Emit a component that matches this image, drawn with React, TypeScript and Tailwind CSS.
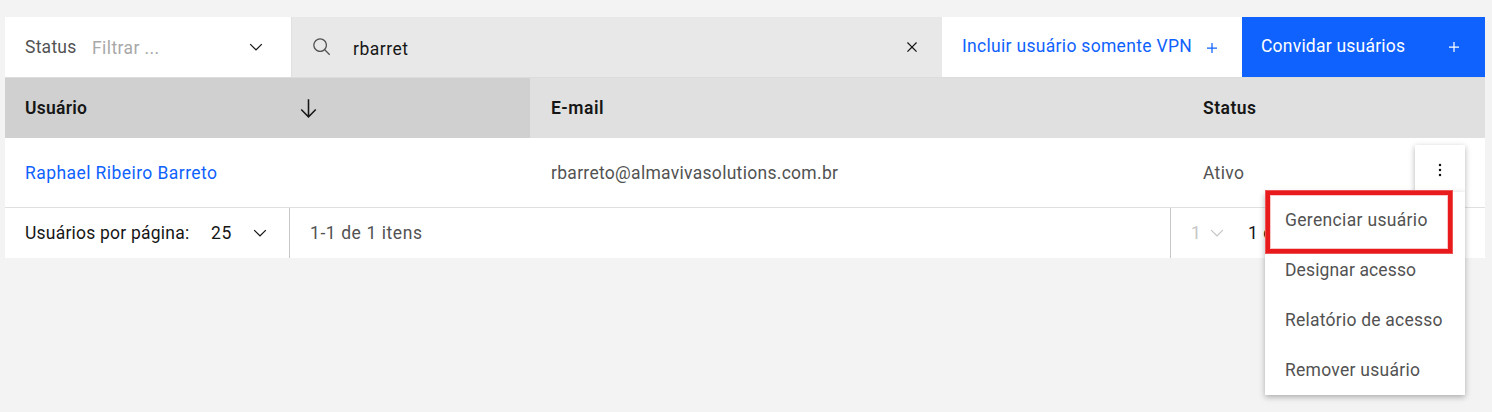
import React from "react";

type IconProps = { className?: string };

const ChevronDown = ({ className = "" }: IconProps) => (
  <svg viewBox="0 0 16 16" fill="currentColor" className={`size-5 shrink-0 ${className}`}>
    <path d="M8 11L3 6 3.7 5.3 8 9.6 12.3 5.3 13 6z" />
  </svg>
);

const Search = ({ className = "" }: IconProps) => (
  <svg viewBox="0 0 32 32" fill="currentColor" className={`size-5 shrink-0 ${className}`}>
    <path d="M29,27.5859l-7.5521-7.5521a11.0177,11.0177,0,1,0-1.4141,1.4141L27.5859,29ZM4,13a9,9,0,1,1,9,9A9.01,9.01,0,0,1,4,13Z" />
  </svg>
);

const Close = ({ className = "" }: IconProps) => (
  <svg viewBox="0 0 32 32" fill="currentColor" className={`size-5 shrink-0 ${className}`}>
    <path d="M24 9.4L22.6 8 16 14.6 9.4 8 8 9.4 14.6 16 8 22.6 9.4 24 16 17.4 22.6 24 24 22.6 17.4 16 24 9.4z" />
  </svg>
);

const Add = ({ className = "" }: IconProps) => (
  <svg viewBox="0 0 32 32" fill="currentColor" className={`size-5 shrink-0 ${className}`}>
    <path d="M17 15V8h-2v7H8v2h7v7h2v-7h7v-2z" />
  </svg>
);

const ArrowDown = ({ className = "" }: IconProps) => (
  <svg viewBox="0 0 32 32" fill="currentColor" className={`size-[25px] shrink-0 ${className}`}>
    <path d="M24.59 16.59L17 24.17V4h-2v20.17l-7.59-7.58L6 18l10 10 10-10-1.41-1.41z" />
  </svg>
);

const Overflow = ({ className = "" }: IconProps) => (
  <svg viewBox="0 0 32 32" fill="currentColor" className={`size-5 shrink-0 ${className}`}>
    <circle cx="16" cy="8" r="2" />
    <circle cx="16" cy="16" r="2" />
    <circle cx="16" cy="24" r="2" />
  </svg>
);

const menuItems = [
  { label: "Gerenciar usuário", spacing: "tracking-[0.33px]" },
  { label: "Designar acesso", spacing: "tracking-[0.12px]" },
  { label: "Relatório de acesso", spacing: "tracking-[0.23px]" },
  { label: "Remover usuário", spacing: "tracking-[0.27px]" },
];

function Toolbar() {
  return (
    <div className="flex h-15 bg-white">
      <div className="flex w-[286px] items-center pl-5">
        <span className="w-[67px] tracking-[0.25px] text-[#525252]">Status</span>
        <span className="mt-0.5 flex-1 tracking-[0.4px] text-[#a8a8a8]">Filtrar ...</span>
        <ChevronDown className="mr-[25px] text-[#161616]" />
      </div>
      <div className="flex w-[651px] items-center border-l border-[#e0e0e0] bg-[#e8e8e8] pl-5">
        <Search className="text-[#525252]" />
        <span className="mt-[3px] ml-[21px] flex-1 tracking-[0.5px] text-[#161616]">rbarret</span>
        <Close className="mr-5 text-[#161616]" />
      </div>
      <button className="flex w-[300px] items-center pl-5 text-[#0f62fe]">
        <span className="-mt-0.5 w-[240px] text-left tracking-[0.31px]">Incluir usuário somente VPN</span>
        <Add className="mt-0.5" />
      </button>
      <button className="flex w-[243px] items-center bg-[#0f62fe] pl-[19px] text-white">
        <span className="-mt-0.5 flex-1 text-left tracking-[0.22px]">Convidar usuários</span>
        <Add className="mr-[21px]" />
      </button>
    </div>
  );
}

function ActionMenu() {
  return (
    <div className="absolute top-[7px] right-5 w-[200px]">
      <div className="flex justify-end">
        <button className="flex h-[47px] w-[50px] justify-center bg-white pt-[15px] text-[#161616] shadow-[0_2px_6px_rgba(0,0,0,0.3)]">
          <Overflow />
        </button>
      </div>
      <ul className="relative h-[203px] bg-white shadow-[0_2px_6px_rgba(0,0,0,0.3)]">
        {menuItems.map((item) => (
          <li key={item.label} className={`flex h-[50px] items-center pl-5 text-[#525252] ${item.spacing}`}>
            <span className="mt-[5px]">{item.label}</span>
          </li>
        ))}
      </ul>
      <div className="absolute top-[45px] left-0 h-16 w-[188px] border border-[#ec5455] shadow-[inset_0_0_0_4px_#e81a1c,inset_0_0_0_5px_#f8c6c6]" />
    </div>
  );
}

export default function App() {
  return (
    <main className="h-[412px] overflow-hidden bg-[#f3f3f3] pt-[17px] pr-[7px] pl-[5px] font-[Roboto,sans-serif] text-[17.5px] leading-6">
      <Toolbar />
      <div className="flex h-[61px] border-t border-[#dcdcdc] bg-[#e0e0e0] font-semibold text-[#161616]">
        <div className="flex w-[525px] items-center bg-[#d0d0d0] pl-5">
          <span className="w-[271px] tracking-[0.25px]">Usuário</span>
          <ArrowDown />
        </div>
        <div className="flex w-[653px] items-center pl-[21px] tracking-[0.5px]">E-mail</div>
        <div className="flex items-center pl-5 tracking-[0.48px]">Status</div>
      </div>
      <div className="relative flex h-[70px] border-b border-[#e0e0e0] bg-white text-[#525252]">
        <div className="flex w-[525px] items-center pl-5 tracking-[0.43px] text-[#0f62fe]">Raphael Ribeiro Barreto</div>
        <div className="flex w-[653px] items-center pl-[21px] tracking-[0.29px]">rbarreto@almavivasolutions.com.br</div>
        <div className="flex items-center pl-5 tracking-[0.35px]">Ativo</div>
        <ActionMenu />
      </div>
      <div className="flex h-[50px] bg-white">
        <div className="flex w-[285px] items-center border-r border-[#c6c6c6] pl-5 text-[#161616]">
          <span className="w-[186px] tracking-[0.22px]">Usuários por página:</span>
          <span className="w-[39px] tracking-[0.6px]">25</span>
          <ChevronDown />
        </div>
        <div className="flex w-[881px] items-center border-r border-[#c6c6c6] pl-5 tracking-[0.58px] text-[#525252]">
          1-1 de 1 itens
        </div>
        <div className="flex items-center pl-5 text-[#c6c6c6]">
          <span className="w-4">1</span>
          <ChevronDown />
          <span className="ml-[21px] tracking-[0.5px] text-[#161616]">1 de 1</span>
        </div>
      </div>
    </main>
  );
}
